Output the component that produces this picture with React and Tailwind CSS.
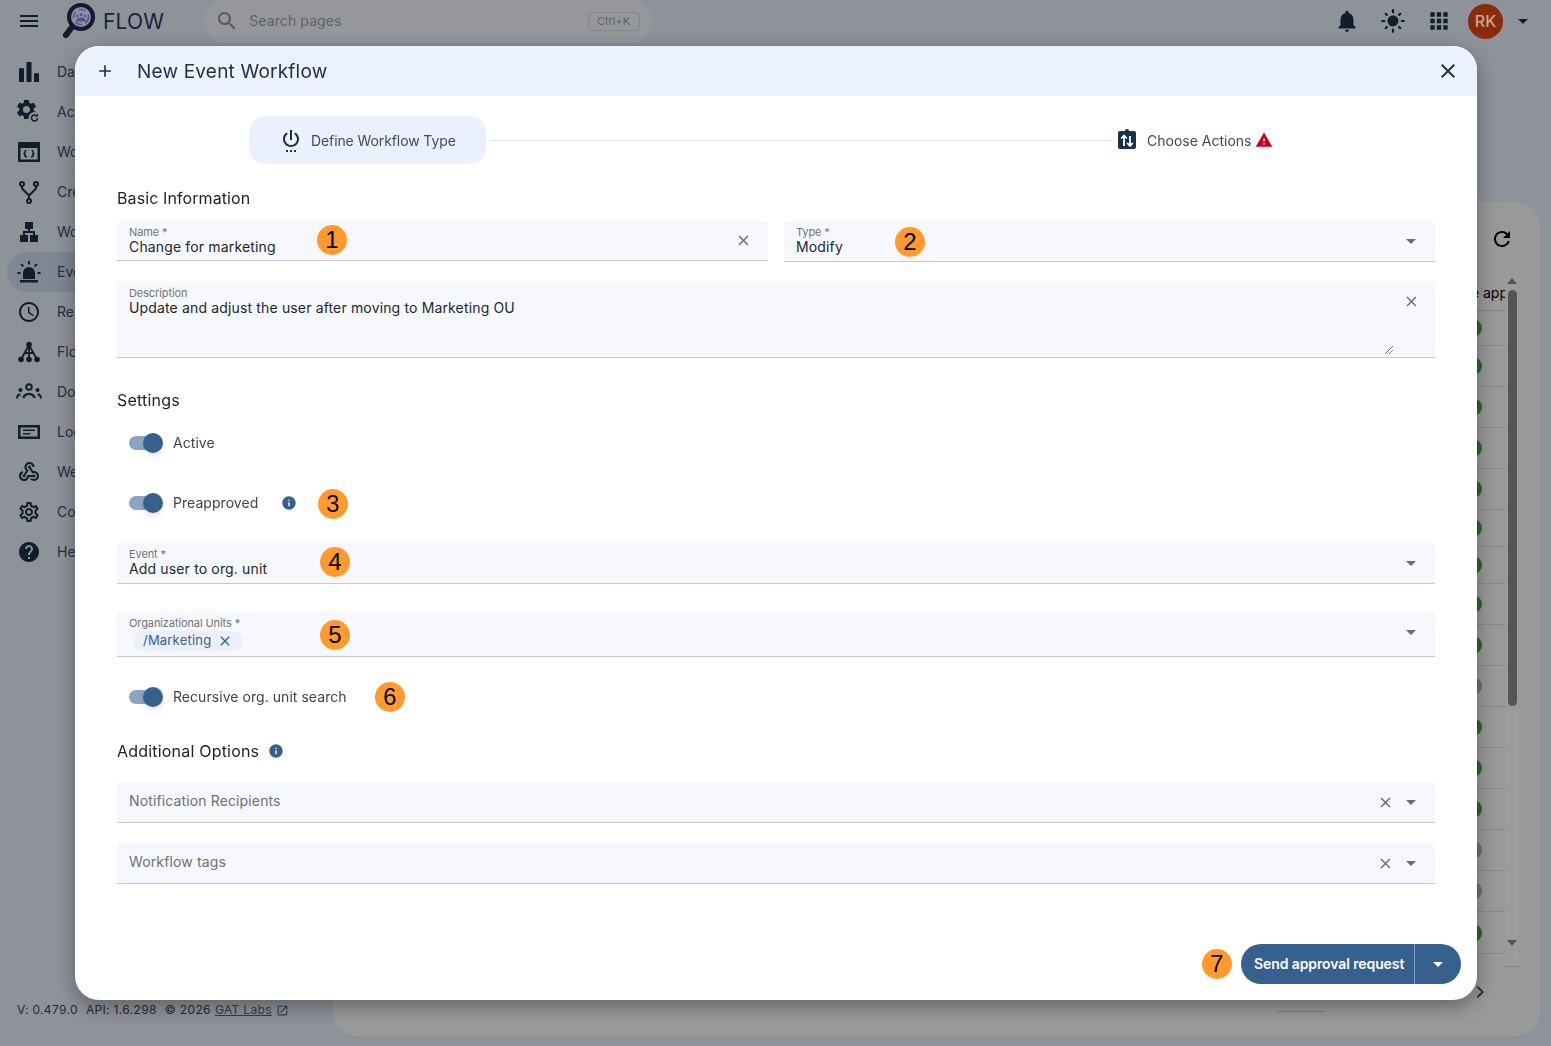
import React from "react";
import {
  MdMenu, MdSearch, MdNotifications, MdApps, MdArrowDropDown, MdAdd, MdClose, MdSettingsPower, MdWarning,
  MdBarChart, MdLan, MdAccessTime, MdWebhook, MdOutlineSettings, MdHelp, MdRefresh, MdInfo,
  MdChevronRight, MdOpenInNew, MdLightMode,
} from "react-icons/md";

const font = { fontFamily: "Inter, 'Noto Sans', sans-serif" };

function GearRefreshIcon(props) {
  return (
    <svg viewBox="0 0 24 24" fill="currentColor" {...props}>
      <g transform="translate(-2.500 -2.500) scale(1)">
        <path d="M19.14 12.94c.04-.3.06-.61.06-.94s-.02-.64-.07-.94l2.03-1.58a.49.49 0 0 0 .12-.61l-1.92-3.32a.49.49 0 0 0-.59-.22l-2.39.96c-.5-.38-1.03-.7-1.62-.94l-.36-2.54a.48.48 0 0 0-.48-.41h-3.84a.48.48 0 0 0-.47.41l-.36 2.54c-.59.24-1.13.57-1.62.94l-2.39-.96a.48.48 0 0 0-.59.22L2.74 8.87a.48.48 0 0 0 .12.61l2.03 1.58c-.05.3-.09.63-.09.94s.02.64.07.94l-2.03 1.58a.49.49 0 0 0-.12.61l1.92 3.32c.12.22.37.29.59.22l2.39-.96c.5.38 1.03.7 1.62.94l.36 2.54c.05.24.24.41.48.41h3.84c.24 0 .44-.17.47-.41l.36-2.54c.59-.24 1.13-.56 1.62-.94l2.39.96c.22.08.47 0 .59-.22l1.92-3.32a.48.48 0 0 0-.12-.61l-2.01-1.58zM12 15.600A3.610 3.610 0 0 1 8.400 12c0-1.980 1.620-3.600 3.600-3.600s3.600 1.620 3.600 3.600-1.620 3.600-3.600 3.600z" />
      </g>
      <circle cx="17.500" cy="18" r="6" fill="#8e9299" />
      <path d="M20.500 18a3 3 0 1 1-.9-2.100" stroke="currentColor" strokeWidth="1.500" fill="none" />
      <path d="M21 13.500v3h-3z" />
    </svg>
  );
}

function WindowCodeIcon(props) {
  return (
    <svg viewBox="0 0 24 24" fill="currentColor" {...props}>
      <path fillRule="evenodd" d="M2 2h20a1 1 0 0 1 1 1v18a1 1 0 0 1-1 1H2a1 1 0 0 1-1-1V3a1 1 0 0 1 1-1zm1.500 6v11.500h17V8h-17z" />
      <path d="M10 10H8.800c-1 0-1.500.6-1.500 1.400v.9c0 .4-.3.7-1 .8v1.200c.7.1 1 .4 1 .8v.9c0 .8.5 1.400 1.500 1.400H10v-1.500h-.6c-.3 0-.5-.2-.5-.5v-1c0-.5-.3-.8-.8-1.200.5-.3.8-.7.8-1.200v-1c0-.3.2-.5.5-.5h.6V10zM14 10h1.200c1 0 1.500.6 1.500 1.400v.9c0 .4.3.7 1 .8v1.200c-.7.1-1 .4-1 .8v.9c0 .8-.5 1.400-1.500 1.400H14v-1.500h.6c.3 0 .5-.2.5-.5v-1c0-.5.3-.8.8-1.200-.5-.3-.8-.7-.8-1.200v-1c0-.3-.2-.5-.5-.5H14V10z" />
    </svg>
  );
}

function ForkIcon(props) {
  return (
    <svg viewBox="0 0 24 24" fill="none" stroke="currentColor" strokeWidth="2" {...props}>
      <circle cx="5" cy="4" r="2" />
      <circle cx="19" cy="4" r="2" />
      <circle cx="12" cy="21" r="2" />
      <path d="M5 6v2.500l7 7V19M19 6v2.500l-7 7" />
    </svg>
  );
}

function SirenIcon(props) {
  return (
    <svg viewBox="0 0 24 24" fill="currentColor" {...props}>
      <path d="M6 19v-6a6 6 0 0 1 12 0v6H6zM3 20h18v2.500H3zM11 1h2v3.500h-2zM3.400 4.800l1.400-1.400 2.300 2.300-1.400 1.400zM19.200 3.400l1.400 1.400-2.300 2.300-1.400-1.400zM.5 12h3v2h-3zM20.500 12h3v2h-3z" />
    </svg>
  );
}

function TreeNodesIcon(props) {
  return (
    <svg viewBox="0 0 24 24" fill="currentColor" {...props}>
      <circle cx="12" cy="4.500" r="2.800" />
      <circle cx="4" cy="19.500" r="2.800" />
      <circle cx="12" cy="19.500" r="2.800" />
      <circle cx="20" cy="19.500" r="2.800" />
      <path d="M12 5 4 19.500M12 5v14.500M12 5l8 14.500M8 13h8" stroke="currentColor" strokeWidth="1.800" fill="none" />
    </svg>
  );
}

function GroupIcon(props) {
  return (
    <svg viewBox="0 0 26 24" fill="currentColor" {...props}>
      <circle cx="13" cy="7" r="2.800" fill="none" stroke="currentColor" strokeWidth="2" />
      <circle cx="4.500" cy="10" r="2" />
      <circle cx="21.500" cy="10" r="2" />
      <path d="M6.500 18c0-3.500 3-5 6.500-5s6.500 1.500 6.500 5h-2.200c-.4-2-2-3-4.300-3s-3.900 1-4.300 3z" />
      <path d="M0 18.500c0-3 1.500-5 4.500-5v2c-1.500 0-2.400 1-2.500 3zM26 18.500c0-3-1.500-5-4.500-5v2c1.500 0 2.400 1 2.500 3z" />
    </svg>
  );
}

function LogIcon(props) {
  return (
    <svg viewBox="0 0 24 24" fill="currentColor" {...props}>
      <path fillRule="evenodd" d="M1 5h22v14H1V5zm2.500 2.500v9h17v-9h-17z" />
      <path d="M6 9.500h12V11H6zM6 13h7.500v1.500H6z" />
    </svg>
  );
}

function ActionsIcon(props) {
  return (
    <svg viewBox="0 0 18 20" {...props}>
      <rect x="0" y="2" width="18" height="18" rx="2" fill="#1b2f4a" />
      <circle cx="9" cy="2" r="2" fill="#1b2f4a" />
      <path d="M6 17V7M3.200 9.500 6 6.500l2.800 3M12 7v10M9.200 14l2.800 3 2.800-3" stroke="#fff" strokeWidth="1.800" fill="none" />
    </svg>
  );
}

function LogoIcon(props) {
  return (
    <svg viewBox="0 0 34 38" {...props}>
      <path d="M10 25 4 33" stroke="#111d2c" strokeWidth="6" strokeLinecap="round" />
      <circle cx="19" cy="15" r="12" fill="#8f90a6" stroke="#111d2c" strokeWidth="4" />
      <circle cx="19" cy="15" r="7.500" fill="none" stroke="#5d4f94" strokeWidth="1.500" strokeDasharray="7 4" />
      <circle cx="19" cy="12.500" r="1.600" fill="#5d4f94" />
      <circle cx="15" cy="14" r="1.300" fill="#5d4f94" />
      <circle cx="23" cy="14" r="1.300" fill="#5d4f94" />
      <path d="M14 19.500c0-2.500 2-4 5-4s5 1.500 5 4z" fill="#5d4f94" />
    </svg>
  );
}

const navItems = [
  { icon: MdBarChart, label: "Dashboard", size: "w-[30px] h-[30px]" },
  { icon: GearRefreshIcon, label: "Actions" },
  { icon: WindowCodeIcon, label: "Workflows" },
  { icon: ForkIcon, label: "Create" },
  { icon: MdLan, label: "Workspace" },
  { icon: SirenIcon, label: "Events", active: true },
  { icon: MdAccessTime, label: "Reports" },
  { icon: TreeNodesIcon, label: "Flows" },
  { icon: GroupIcon, label: "Domain", size: "w-[26px] h-[24px]" },
  { icon: LogIcon, label: "Logs" },
  { icon: MdWebhook, label: "Webhooks" },
  { icon: MdOutlineSettings, label: "Config" },
  { icon: MdHelp, label: "Help" },
];

const rows = [
  { h: "h-[35px]", on: true }, { h: "h-[41px]", on: true }, { h: "h-[41px]", on: true }, { h: "h-[41px]", on: true },
  { h: "h-[41px]", on: true }, { h: "h-[37px]", on: true }, { h: "h-[37px]", on: true }, { h: "h-[41px]", on: true },
  { h: "h-[41px]", on: true }, { h: "h-[41px]", on: false }, { h: "h-[41px]", on: true }, { h: "h-[41px]", on: true },
  { h: "h-[41px]", on: true }, { h: "h-[41px]", on: false }, { h: "h-[41px]", on: false }, { h: "h-[42px]", on: true },
];

function Sidebar() {
  return (
    <div className="w-[333px] shrink-0 flex flex-col pt-[10px] pl-[7px]">
      {navItems.map((item) => {
        const Icon = item.icon;
        return (
          <div
            key={item.label}
            className={`h-10 flex items-center w-[200px] rounded-l-full ${item.active ? "bg-[#7f8694] rounded-r-full" : ""}`}
          >
            <div className="w-[44px] flex justify-center">
              <Icon className={item.size || "w-6 h-6"} />
            </div>
            <span className="ml-[6px] text-sm text-[#232f40]">{item.label}</span>
          </div>
        );
      })}
      <div className="mt-auto mb-[28px] -ml-[7px] pl-[17px] flex items-center text-xs text-[#1f2a38] whitespace-nowrap tracking-[0.35px]">
        <span>V: 0.479.0</span>
        <span className="ml-[8px]">API: 1.6.298</span>
        <span className="ml-[8px]">© 2026</span>
        <span className="ml-[4px] underline text-[#2c3e55]">GAT Labs</span>
        <MdOpenInNew className="ml-[4px] w-[13px] h-[13px] text-[#2c3e55]" />
      </div>
    </div>
  );
}

function BackgroundCard() {
  return (
    <div className="flex-1 mt-[160px] mb-[10px] mr-[11px] rounded-[24px] bg-[#999999] relative flex flex-col items-end pr-[21px] pt-[25px] overflow-hidden">
      <MdRefresh className="w-6 h-6 text-black mr-[5px]" />
      <div className="mt-[25px] flex">
        <div className="w-[200px] overflow-hidden">
          <div className="h-[35px] border-b border-[#828282] flex items-center justify-end text-sm text-black whitespace-nowrap overflow-hidden">
            <span className="-mr-[3px]">Name type app</span>
          </div>
          {rows.map((row, i) => (
            <div key={i} className={`${row.h} border-b border-[#888888] last:border-b-0 flex items-center pl-[159px]`}>
              <span className={`w-[18px] h-[18px] rounded-full ${row.on ? "bg-[#29692c]" : "bg-[#6f6f6f]"}`} />
            </div>
          ))}
          <div className="h-[13px]" />
        </div>
        <div className="w-[14px] bg-[#9b9b9b] border-b border-[#828282] flex flex-col items-center">
          <svg viewBox="0 0 10 6" className="w-[10px] h-[6px] mt-[2px] text-[#555]" fill="currentColor"><path d="M5 0l5 6H0z" /></svg>
          <div className="w-[9px] h-[416px] mt-[6px] rounded-full bg-[#555555]" />
          <svg viewBox="0 0 10 6" className="w-[10px] h-[6px] mt-[234px] text-[#555]" fill="currentColor"><path d="M5 6l5-6H0z" /></svg>
        </div>
      </div>
      <MdChevronRight className="absolute left-[1135px] top-[778px] w-6 h-6 text-[#333]" />
      <div className="absolute left-[944px] top-[809px] w-[48px] h-px bg-[#7b7b7b]" />
    </div>
  );
}

function Badge({ n, className }) {
  return (
    <span
      className={`absolute w-[30px] h-[30px] rounded-full bg-[#ff9a2e] text-black text-[24px] leading-[30px] text-center ${className}`}
      style={{ fontFamily: "'Liberation Sans', sans-serif" }}
    >
      {n}
    </span>
  );
}

function Field({ label, value, height = "h-[41px]", clear, arrow, children, className = "" }) {
  return (
    <div className={`relative bg-[#f6f8fd] border-b border-[#c6c8cc] rounded-t ${height} pl-3 pr-[14px] pt-[5px] ${className}`}>
      <div className="text-[11px] leading-[12px] text-[#70747a] tracking-[-0.1px]">{label}</div>
      <div className="text-sm leading-[17px] text-[#23272c] tracking-[0.15px]">{value}</div>
      {clear && <MdClose className={`absolute top-[11px] w-[17px] h-[17px] text-[#6a6d72] ${clear}`} />}
      {arrow && <MdArrowDropDown className="absolute right-[12px] top-[8px] w-6 h-6 text-[#6a6d72]" />}
      {children}
    </div>
  );
}

function PlaceholderSelect({ label, className = "" }) {
  return (
    <div className={`relative h-[41px] bg-[#f6f8fd] border-b border-[#c6c8cc] rounded-t flex items-center pl-3 pr-3 ${className}`}>
      <span className="text-sm text-[#6d7176] tracking-[0.13px] -mt-[3px]">{label}</span>
      <div className="ml-auto flex items-center">
        <MdClose className="w-[17px] h-[17px] text-[#6a6d72]" />
        <MdArrowDropDown className="ml-[5px] w-6 h-6 text-[#6a6d72]" />
      </div>
    </div>
  );
}

function Toggle({ label, className = "", children }) {
  return (
    <div className={`relative flex items-center h-6 pl-3 ${className}`}>
      <div className="relative w-[32px] h-[14px] rounded-full bg-[#8ba4c1]">
        <span className="absolute -right-[2px] -top-[3px] w-5 h-5 rounded-full bg-[#36618e] shadow-md" />
      </div>
      <span className="ml-3 text-sm text-[#3f4349] tracking-[0.05px]">{label}</span>
      {children}
    </div>
  );
}

function Modal() {
  return (
    <div className="fixed left-[75px] top-[46px] w-[1402px] h-[954px] bg-white rounded-[24px] shadow-[0_6px_20px_rgba(0,0,0,0.35)] overflow-hidden flex flex-col text-[#1d2024]">
      <div className="h-[50px] shrink-0 bg-[#ebf2fe] flex items-center pl-[20px] pr-[17px]">
        <MdAdd className="w-5 h-5 text-[#20324a]" />
        <span className="ml-[22px] mt-[2px] text-[19px] text-[#20324a] tracking-[0.2px]">New Event Workflow</span>
        <MdClose className="ml-auto w-6 h-6 text-[#20324a]" />
      </div>

      <div className="flex items-center mt-[20px] pl-[174px]">
        <div className="w-[237px] h-12 rounded-[16px] bg-[#ebf1fc] flex items-center pl-[30px]">
          <MdSettingsPower className="w-6 h-6 text-[#1b2f4a]" />
          <span className="ml-[8px] mt-[2px] text-sm text-[#3d4a5c] tracking-[-0.1px]">Define Workflow Type</span>
        </div>
        <div className="ml-[4px] w-[622px] h-px bg-[#dfe1e4]" />
        <ActionsIcon className="ml-[6px] w-[18px] h-[20px] -mt-[3px]" />
        <span className="ml-[11px] mt-[2px] text-sm text-[#3d4a5c]">Choose Actions</span>
        <MdWarning className="ml-[4px] w-[18px] h-[18px] text-[#c8001e]" />
      </div>

      <div className="flex-1 px-[42px]">
        <div className="mt-[24px] h-5 leading-5 text-base tracking-[0.1px]">Basic Information</div>
        <div className="mt-[13px] grid grid-cols-2 gap-4">
          <Field label="Name *" value="Change for marketing" height="h-[40px]" clear="right-[16px]">
            <Badge n="1" className="left-[200px] top-[4px]" />
          </Field>
          <Field label="Type *" value="Modify" arrow>
            <Badge n="2" className="left-[111px] top-[6px]" />
          </Field>
        </div>
        <Field
          label="Description"
          value="Update and adjust the user after moving to Marketing OU"
          height="h-[76px]"
          clear="right-[15px]"
          className="mt-[20px]"
        >
          <svg viewBox="0 0 8 8" className="absolute right-[42px] bottom-[3px] w-2 h-2 text-[#555]" stroke="currentColor" fill="none" strokeWidth="0.8">
            <path d="M0 8 8 0M4 8l4-4" />
          </svg>
        </Field>

        <div className="mt-[32px] h-5 leading-5 text-base tracking-[0.2px]">Settings</div>
        <Toggle label="Active" className="mt-[21px]" />
        <Toggle label="Preapproved" className="mt-[36px]">
          <MdInfo className="ml-[23px] w-4 h-4 text-[#36618e]" />
          <Badge n="3" className="left-[201px] top-[-2px]" />
        </Toggle>
        <Field label="Event *" value="Add user to org. unit" arrow className="mt-[28px]">
          <Badge n="4" className="left-[203px] top-[4px]" />
        </Field>
        <Field label="Organizational Units *" value="" height="h-[45px]" arrow className="mt-[28px]">
          <Badge n="5" className="left-[203px] top-[8px]" />
          <div className="mt-[2px] ml-[4px] w-[110px] h-5 rounded-full bg-[#ebeff9] flex items-center pl-[10px] text-[13px] text-[#36618e] tracking-[0.2px]">
            /Marketing
            <MdClose className="ml-[6px] w-[16px] h-[16px]" />
          </div>
        </Field>
        <Toggle label="Recursive org. unit search" className="mt-[28px]">
          <Badge n="6" className="left-[258px] top-[-3px]" />
        </Toggle>
        <div className="mt-[32px] h-5 flex items-center text-base tracking-[0.2px]">
          Additional Options
          <MdInfo className="ml-[9px] w-4 h-4 text-[#36618e]" />
        </div>
        <PlaceholderSelect label="Notification Recipients" className="mt-[21px]" />
        <PlaceholderSelect label="Workflow tags" className="mt-[20px]" />
      </div>

      <div className="flex items-center justify-end pr-[16px] pb-[16px]">
        <span className="relative w-[30px] h-[30px] mr-[9px] -mt-[1px]">
          <Badge n="7" className="left-0 top-0" />
        </span>
        <div className="h-10 w-[220px] rounded-full bg-[#36618e] text-white flex items-center">
          <span className="pl-[13px] w-[173px] text-sm font-semibold whitespace-nowrap tracking-[-0.1px]">Send approval request</span>
          <div className="h-10 w-[47px] border-l border-[#7f9cbc] flex items-center justify-center">
            <MdArrowDropDown className="w-6 h-6" />
          </div>
        </div>
      </div>
    </div>
  );
}

export default function App() {
  return (
    <div className="w-[1551px] h-[1046px] overflow-hidden bg-[#8e9299] text-[#111d2c] flex flex-col" style={font}>
      <div className="h-[42px] shrink-0 flex items-center pl-[17px] pr-[16px]">
        <MdMenu className="w-6 h-6" />
        <LogoIcon className="ml-[21px] w-[34px] h-[38px]" />
        <span className="ml-[7px] mt-[1px] text-[21px] tracking-[0.2px] text-[#15243a]">FLOW</span>
        <div className="ml-[39px] w-[450px] h-[42px] rounded-full bg-[#95979b] flex items-center pl-[12px]">
          <MdSearch className="w-6 h-6 text-[#55585d]" />
          <span className="ml-[10px] text-sm text-[#5e6268] tracking-[0.1px]">Search pages</span>
          <span className="ml-[246px] h-[19px] w-[52px] rounded border border-[#85878b] text-[11px] leading-[17px] text-center text-[#5e6268]">Ctrl+K</span>
        </div>
        <div className="ml-auto flex items-center">
          <MdNotifications className="w-[26px] h-[26px]" />
          <MdLightMode className="ml-[20px] w-[26px] h-[26px]" />
          <MdApps className="ml-[20px] w-[26px] h-[26px]" />
          <span className="ml-[16px] w-[35px] h-[35px] rounded-full bg-[#8a2b0d] text-[#c9a691] text-base font-medium flex items-center justify-center">RK</span>
          <MdArrowDropDown className="ml-[8px] w-6 h-6" />
        </div>
      </div>
      <div className="flex-1 flex min-h-0">
        <Sidebar />
        <BackgroundCard />
      </div>
      <Modal />
    </div>
  );
}
